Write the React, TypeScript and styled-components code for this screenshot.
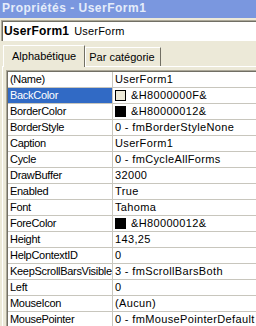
import React from 'react';
import styled, { createGlobalStyle } from 'styled-components';

type Prop = {
  name: string;
  value: string;
  swatch?: string;
};

const props: Prop[] = [
  { name: '(Name)', value: 'UserForm1' },
  { name: 'BackColor', value: '&H8000000F&', swatch: '#ece9d8' },
  { name: 'BorderColor', value: '&H80000012&', swatch: '#000000' },
  { name: 'BorderStyle', value: '0 - fmBorderStyleNone' },
  { name: 'Caption', value: 'UserForm1' },
  { name: 'Cycle', value: '0 - fmCycleAllForms' },
  { name: 'DrawBuffer', value: '32000' },
  { name: 'Enabled', value: 'True' },
  { name: 'Font', value: 'Tahoma' },
  { name: 'ForeColor', value: '&H80000012&', swatch: '#000000' },
  { name: 'Height', value: '143,25' },
  { name: 'HelpContextID', value: '0' },
  { name: 'KeepScrollBarsVisible', value: '3 - fmScrollBarsBoth' },
  { name: 'Left', value: '0' },
  { name: 'MouseIcon', value: '(Aucun)' },
  { name: 'MousePointer', value: '0 - fmMousePointerDefault' },
  // next row is only partly visible at the bottom edge
  { name: '', value: '' },
];

const GlobalStyle = createGlobalStyle`
  html, body {
    margin: 0;
    padding: 0;
    background: #ece9d8;
  }
  body {
    font-family: 'Liberation Sans', Arial, sans-serif;
    font-size: 11px;
  }
`;

const Window = styled.div`
  width: 256px;
  height: 326px;
  overflow: hidden;
  display: flex;
  flex-direction: column;
  background: #ece9d8;
`;

const TitleBar = styled.div`
  height: 18px;
  flex-shrink: 0;
  background: #7a97df;
  color: #e4ecfa;
  font-weight: bold;
  font-size: 12px;
  letter-spacing: 0.5px;
  line-height: 17px;
  padding-left: 2px;
  white-space: nowrap;
`;

const Combo = styled.div`
  margin: 2px 0 0 1px;
  height: 20px;
  flex-shrink: 0;
  background: #fff;
  border-top: 1px solid #aca899;
  border-left: 1px solid #aca899;
  box-shadow: inset 1px 1px 0 #716f64;
  display: flex;
  align-items: center;
  gap: 5px;
  padding-left: 2px;
  white-space: nowrap;
  letter-spacing: 0.2px;
`;

const ObjName = styled.span`
  font-weight: bold;
  font-size: 12px;
`;

const TabStrip = styled.div`
  display: flex;
  align-items: flex-end;
  height: 23px;
  margin-top: 2px;
  padding-left: 3px;
  flex-shrink: 0;
`;

const Tab = styled.div<{ $active?: boolean }>`
  height: ${(p) => (p.$active ? '22px' : '19px')};
  box-sizing: border-box;
  padding: ${(p) => (p.$active ? '0 8px 0 8px' : '0 5px 0 3px')};
  border-top: 1px solid #fff;
  border-left: 1px solid #fff;
  border-right: 1px solid #716f64;
  line-height: ${(p) => (p.$active ? '20px' : '18px')};
  white-space: nowrap;
  position: relative;
  z-index: ${(p) => (p.$active ? 1 : 0)};
  margin-bottom: ${(p) => (p.$active ? '-1px' : '0')};
  background: #ece9d8;
`;

const Panel = styled.div`
  flex: 1;
  margin-left: 2px;
  border-top: 1px solid #fff;
  border-left: 1px solid #fff;
  padding: 3px 0 0 3px;
`;

const Grid = styled.div`
  border-top: 1px solid #aca899;
  border-left: 1px solid #aca899;
  box-shadow: inset 1px 1px 0 #716f64;
  padding: 1px 0 0 1px;
  background: #fff;
`;

const Row = styled.div`
  display: grid;
  grid-template-columns: 105px 1fr;
  height: 16px;
  box-sizing: border-box;
  border-bottom: 1px solid #c8c6bd;
`;

const NameCell = styled.div<{ $selected?: boolean }>`
  padding-left: 2px;
  line-height: 15px;
  border-right: 1px solid #c8c6bd;
  white-space: nowrap;
  overflow: hidden;
  letter-spacing: -0.3px;
  background: ${(p) => (p.$selected ? '#316ac5' : '#fff')};
  color: ${(p) => (p.$selected ? '#fff' : '#000')};
`;

const ValueCell = styled.div`
  padding-left: 2px;
  line-height: 15px;
  display: flex;
  align-items: center;
  white-space: nowrap;
  letter-spacing: 0.35px;
`;

const Swatch = styled.span<{ $color: string }>`
  width: 9px;
  height: 9px;
  border: 1px solid #000;
  background: ${(p) => p.$color};
  margin-right: 5px;
  flex-shrink: 0;
`;

export default function App() {
  return (
    <Window>
      <GlobalStyle />
      <TitleBar>Propriétés - UserForm1</TitleBar>
      <Combo>
        <ObjName>UserForm1</ObjName>
        <span>UserForm</span>
      </Combo>
      <TabStrip>
        <Tab $active>Alphabétique</Tab>
        <Tab>Par catégorie</Tab>
      </TabStrip>
      <Panel>
        <Grid>
          {props.map((p, i) => (
            <Row key={i}>
              <NameCell $selected={i === 1}>{p.name}</NameCell>
              <ValueCell>
                {p.swatch && <Swatch $color={p.swatch} />}
                {p.value}
              </ValueCell>
            </Row>
          ))}
        </Grid>
      </Panel>
    </Window>
  );
}
